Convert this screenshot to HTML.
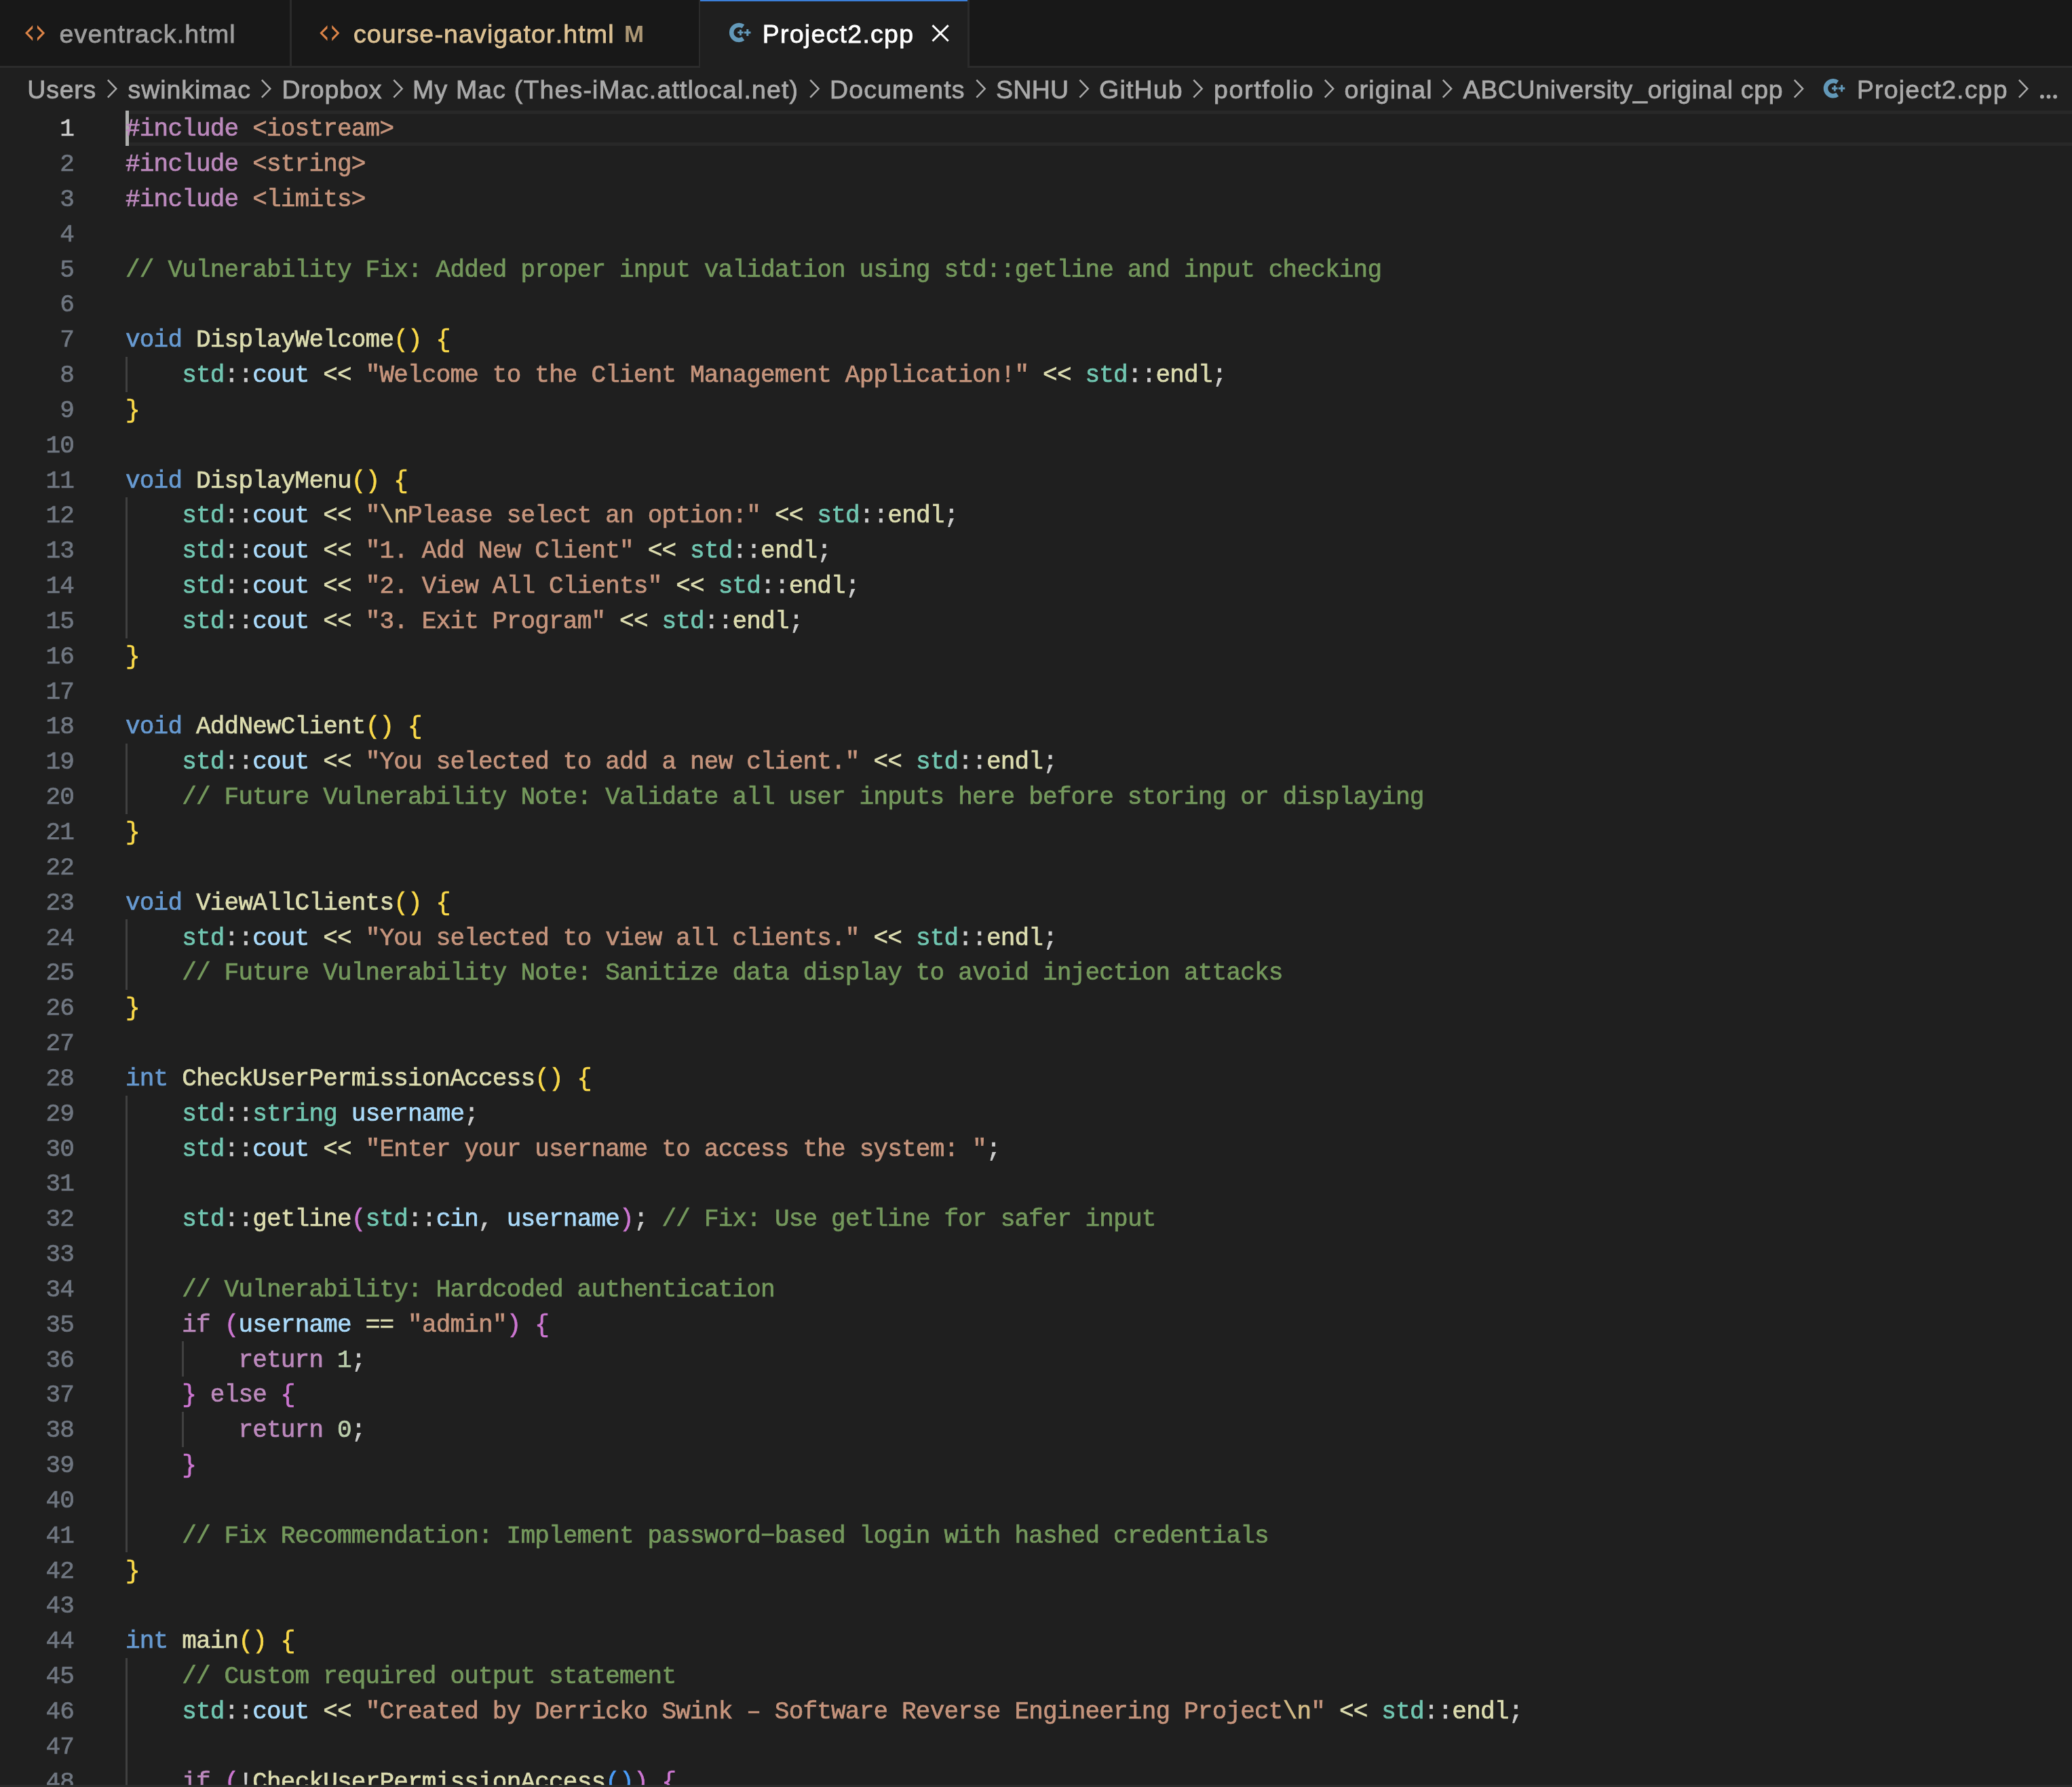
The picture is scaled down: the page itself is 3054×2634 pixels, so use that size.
<!DOCTYPE html>
<html><head><meta charset="utf-8"><title>Project2.cpp</title><style>

html,body{margin:0;padding:0;background:#1f1f1f;}
body{width:3054px;height:2634px;overflow:hidden;position:relative;font-family:"Liberation Sans",sans-serif;font-kerning:none;}
.abs{position:absolute;}
.t{position:absolute;white-space:pre;font-family:"Liberation Sans",sans-serif;-webkit-text-stroke:0.8px;}
#root{position:absolute;left:0;top:0;width:3054px;height:2634px;overflow:hidden;will-change:transform;transform:translateZ(0);}
.ln,.cl{position:absolute;white-space:pre;font-family:"Liberation Mono",monospace;font-size:36.000px;letter-spacing:-0.8035px;line-height:51.84px;height:51.84px;-webkit-text-stroke:0.7px;}
.ln{color:#6f7680;text-align:right;left:0;width:109.00px;}
.cl{left:185.00px;color:#cccccc;}
.g{position:absolute;width:2.88px;background:#404040;}

.fg{color:#cccccc}
.kw{color:#679ad1}
.ctl{color:#bc89bd}
.fn{color:#dcdcaf}
.st{color:#c5947c}
.cm{color:#74985c}
.var{color:#aadafa}
.ty{color:#71c6b1}
.num{color:#bacdab}
.esc{color:#d2bb85}
.b1{color:#f9d849}
.b2{color:#cc76d1}
.b3{color:#4a9df8}
</style></head><body><div id="root">
<div class="abs" style="left:0;top:0;width:3054px;height:99.90px;background:#181818;"></div>
<div class="abs" style="left:0;top:97.02px;width:3054px;height:2.88px;background:#2b2b2b;"></div>
<div class="abs" style="left:427.2px;top:0;width:2.88px;height:99.90px;background:#2b2b2b;"></div>
<div class="abs" style="left:1029.8px;top:0;width:2.7px;height:99.90px;background:#2b2b2b;"></div>
<div class="abs" style="left:1032.3px;top:0;width:393.60px;height:99.90px;background:#1f1f1f;"></div>
<div class="abs" style="left:1032.3px;top:0;width:393.60px;height:2.1px;background:#3b7fd9;"></div>
<div class="abs" style="left:1425.9px;top:0;width:2.88px;height:99.90px;background:#2b2b2b;"></div>
<svg class="abs" style="left:0;top:0;overflow:visible" width="10" height="10"><g transform="translate(0.00,0)" fill="#dc8448"><polygon points="36.99,48.76 48.19,37.37 48.19,42.0 41.04,48.76 48.19,55.52 48.19,60.35"/><polygon points="54.94,36.99 66.14,48.76 54.94,60.54 54.94,55.7 62.08,48.76 54.94,41.8"/></g></svg>
<svg class="abs" style="left:0;top:0;overflow:visible" width="10" height="10"><g transform="translate(434.30,0)" fill="#dc8448"><polygon points="36.99,48.76 48.19,37.37 48.19,42.0 41.04,48.76 48.19,55.52 48.19,60.35"/><polygon points="54.94,36.99 66.14,48.76 54.94,60.54 54.94,55.7 62.08,48.76 54.94,41.8"/></g></svg>
<svg class="abs" style="left:0;top:0;overflow:visible" width="10" height="10"><g transform="translate(0.00,0.00)"><path d="M1095.43 39.02 A10.95 10.95 0 1 0 1095.43 56.96" fill="none" stroke="#6399b9" stroke-width="6.50"/><path d="M1087.22 47.9h8.5M1091.47 43.65v8.5" stroke="#6399b9" stroke-width="2.9" fill="none"/><path d="M1096.9 47.9h9.6M1101.8 42.9v10" stroke="#6399b9" stroke-width="3.0" fill="none"/></g></svg>
<svg class="abs" style="left:0;top:0;overflow:visible" width="10" height="10"><g transform="translate(1612.80,82.30)"><path d="M1095.43 39.02 A10.95 10.95 0 1 0 1095.43 56.96" fill="none" stroke="#6399b9" stroke-width="6.50"/><path d="M1087.22 47.9h8.5M1091.47 43.65v8.5" stroke="#6399b9" stroke-width="2.9" fill="none"/><path d="M1096.9 47.9h9.6M1101.8 42.9v10" stroke="#6399b9" stroke-width="3.0" fill="none"/></g></svg>
<svg class="abs" style="left:0;top:0;overflow:visible" width="10" height="10"><path d="M1374.5 37.4L1397.7 60.5M1397.7 37.4L1374.5 60.5" stroke="#ffffff" stroke-width="2.9" fill="none"/></svg>
<div class="t" style="left:87.50px;top:31.86px;font-size:37.50px;line-height:37.50px;letter-spacing:1.181px;color:#9d9d9d;">eventrack.html</div>
<div class="t" style="left:520.90px;top:31.86px;font-size:37.50px;line-height:37.50px;letter-spacing:1.155px;color:#dcc193;">course-navigator.html</div>
<div class="t" style="left:919.70px;top:33.17px;font-size:34.30px;line-height:34.30px;letter-spacing:-3.572px;color:#ab9674;font-weight:bold;-webkit-text-stroke:0;transform:scaleX(1.02);transform-origin:0 0;">M</div>
<div class="t" style="left:1123.70px;top:31.86px;font-size:37.50px;line-height:37.50px;letter-spacing:1.268px;color:#ffffff;">Project2.cpp</div>
<div class="t" style="left:40.30px;top:113.86px;font-size:37.50px;line-height:37.50px;letter-spacing:0.769px;color:#a9a9a9;">Users</div>
<div class="t" style="left:188.50px;top:113.86px;font-size:37.50px;line-height:37.50px;letter-spacing:0.932px;color:#a9a9a9;">swinkimac</div>
<div class="t" style="left:415.50px;top:113.86px;font-size:37.50px;line-height:37.50px;letter-spacing:0.876px;color:#a9a9a9;">Dropbox</div>
<div class="t" style="left:608.10px;top:113.86px;font-size:37.50px;line-height:37.50px;letter-spacing:1.151px;color:#a9a9a9;">My Mac (Thes-iMac.attlocal.net)</div>
<div class="t" style="left:1223.10px;top:113.86px;font-size:37.50px;line-height:37.50px;letter-spacing:1.092px;color:#a9a9a9;">Documents</div>
<div class="t" style="left:1468.10px;top:113.86px;font-size:37.50px;line-height:37.50px;letter-spacing:0.248px;color:#a9a9a9;">SNHU</div>
<div class="t" style="left:1620.10px;top:113.86px;font-size:37.50px;line-height:37.50px;letter-spacing:1.178px;color:#a9a9a9;">GitHub</div>
<div class="t" style="left:1789.10px;top:113.86px;font-size:37.50px;line-height:37.50px;letter-spacing:1.624px;color:#a9a9a9;">portfolio</div>
<div class="t" style="left:1981.50px;top:113.86px;font-size:37.50px;line-height:37.50px;letter-spacing:1.156px;color:#a9a9a9;">original</div>
<div class="t" style="left:2156.50px;top:113.86px;font-size:37.50px;line-height:37.50px;letter-spacing:0.666px;color:#a9a9a9;">ABCUniversity_original cpp</div>
<div class="t" style="left:2736.90px;top:113.86px;font-size:37.50px;line-height:37.50px;letter-spacing:1.196px;color:#a9a9a9;">Project2.cpp</div>
<svg class="abs" style="left:0;top:0;overflow:visible" width="10" height="10"><g fill="#a9a9a9"><circle cx="3009.9" cy="142.5" r="2.9"/><circle cx="3019.5" cy="142.5" r="2.9"/><circle cx="3029.1" cy="142.5" r="2.9"/></g></svg>
<svg class="abs" style="left:0;top:0;overflow:visible" width="10" height="10"><path d="M158.9 117.9l12.4 12.9-12.4 12.9M385.9 117.9l12.4 12.9-12.4 12.9M580.3 117.9l12.4 12.9-12.4 12.9M1194.2 117.9l12.4 12.9-12.4 12.9M1439.3 117.9l12.4 12.9-12.4 12.9M1591.4 117.9l12.4 12.9-12.4 12.9M1759.3 117.9l12.4 12.9-12.4 12.9M1952.8 117.9l12.4 12.9-12.4 12.9M2126.8 117.9l12.4 12.9-12.4 12.9M2644.8 117.9l12.4 12.9-12.4 12.9M2975.9 117.9l12.4 12.9-12.4 12.9" stroke="#a9a9a9" stroke-width="2.5" fill="none"/></svg>
<div class="abs" style="left:185.00px;top:163.00px;width:2869.00px;height:51.84px;box-sizing:border-box;border-top:5.4px solid #282828;border-bottom:5.4px solid #282828;border-left:0;"></div>
<div class="abs" style="left:185.00px;top:163.00px;width:5.1px;height:51.84px;background:#aeafad;"></div>
<div class="g" style="left:185.00px;top:525.88px;height:51.84px;"></div>
<div class="g" style="left:185.00px;top:733.24px;height:207.36px;"></div>
<div class="g" style="left:185.00px;top:1096.12px;height:103.68px;"></div>
<div class="g" style="left:185.00px;top:1355.32px;height:103.68px;"></div>
<div class="g" style="left:185.00px;top:1614.52px;height:673.92px;"></div>
<div class="g" style="left:185.00px;top:2443.96px;height:207.36px;"></div>
<div class="g" style="left:268.20px;top:1977.40px;height:51.84px;"></div>
<div class="g" style="left:268.20px;top:2081.08px;height:51.84px;"></div>
<div class="ln" style="top:165.20px;color:#cccccc;">1</div>
<div class="cl" style="top:165.20px;"><span class="ctl">#include</span> <span class="st">&lt;iostream&gt;</span></div>
<div class="ln" style="top:217.04px;">2</div>
<div class="cl" style="top:217.04px;"><span class="ctl">#include</span> <span class="st">&lt;string&gt;</span></div>
<div class="ln" style="top:268.88px;">3</div>
<div class="cl" style="top:268.88px;"><span class="ctl">#include</span> <span class="st">&lt;limits&gt;</span></div>
<div class="ln" style="top:320.72px;">4</div>
<div class="ln" style="top:372.56px;">5</div>
<div class="cl" style="top:372.56px;"><span class="cm">// Vulnerability Fix: Added proper input validation using std::getline and input checking</span></div>
<div class="ln" style="top:424.40px;">6</div>
<div class="ln" style="top:476.24px;">7</div>
<div class="cl" style="top:476.24px;"><span class="kw">void</span> <span class="fn">DisplayWelcome</span><span class="b1">()</span> <span class="b1">{</span></div>
<div class="ln" style="top:528.08px;">8</div>
<div class="cl" style="top:528.08px;">    <span class="ty">std</span>::<span class="var">cout</span> <span class="fn">&lt;&lt;</span> <span class="st">&quot;Welcome to the Client Management Application!&quot;</span> <span class="fn">&lt;&lt;</span> <span class="ty">std</span>::<span class="fn">endl</span>;</div>
<div class="ln" style="top:579.92px;">9</div>
<div class="cl" style="top:579.92px;"><span class="b1">}</span></div>
<div class="ln" style="top:631.76px;">10</div>
<div class="ln" style="top:683.60px;">11</div>
<div class="cl" style="top:683.60px;"><span class="kw">void</span> <span class="fn">DisplayMenu</span><span class="b1">()</span> <span class="b1">{</span></div>
<div class="ln" style="top:735.44px;">12</div>
<div class="cl" style="top:735.44px;">    <span class="ty">std</span>::<span class="var">cout</span> <span class="fn">&lt;&lt;</span> <span class="st">&quot;</span><span class="esc">\n</span><span class="st">Please select an option:&quot;</span> <span class="fn">&lt;&lt;</span> <span class="ty">std</span>::<span class="fn">endl</span>;</div>
<div class="ln" style="top:787.28px;">13</div>
<div class="cl" style="top:787.28px;">    <span class="ty">std</span>::<span class="var">cout</span> <span class="fn">&lt;&lt;</span> <span class="st">&quot;1. Add New Client&quot;</span> <span class="fn">&lt;&lt;</span> <span class="ty">std</span>::<span class="fn">endl</span>;</div>
<div class="ln" style="top:839.12px;">14</div>
<div class="cl" style="top:839.12px;">    <span class="ty">std</span>::<span class="var">cout</span> <span class="fn">&lt;&lt;</span> <span class="st">&quot;2. View All Clients&quot;</span> <span class="fn">&lt;&lt;</span> <span class="ty">std</span>::<span class="fn">endl</span>;</div>
<div class="ln" style="top:890.96px;">15</div>
<div class="cl" style="top:890.96px;">    <span class="ty">std</span>::<span class="var">cout</span> <span class="fn">&lt;&lt;</span> <span class="st">&quot;3. Exit Program&quot;</span> <span class="fn">&lt;&lt;</span> <span class="ty">std</span>::<span class="fn">endl</span>;</div>
<div class="ln" style="top:942.80px;">16</div>
<div class="cl" style="top:942.80px;"><span class="b1">}</span></div>
<div class="ln" style="top:994.64px;">17</div>
<div class="ln" style="top:1046.48px;">18</div>
<div class="cl" style="top:1046.48px;"><span class="kw">void</span> <span class="fn">AddNewClient</span><span class="b1">()</span> <span class="b1">{</span></div>
<div class="ln" style="top:1098.32px;">19</div>
<div class="cl" style="top:1098.32px;">    <span class="ty">std</span>::<span class="var">cout</span> <span class="fn">&lt;&lt;</span> <span class="st">&quot;You selected to add a new client.&quot;</span> <span class="fn">&lt;&lt;</span> <span class="ty">std</span>::<span class="fn">endl</span>;</div>
<div class="ln" style="top:1150.16px;">20</div>
<div class="cl" style="top:1150.16px;">    <span class="cm">// Future Vulnerability Note: Validate all user inputs here before storing or displaying</span></div>
<div class="ln" style="top:1202.00px;">21</div>
<div class="cl" style="top:1202.00px;"><span class="b1">}</span></div>
<div class="ln" style="top:1253.84px;">22</div>
<div class="ln" style="top:1305.68px;">23</div>
<div class="cl" style="top:1305.68px;"><span class="kw">void</span> <span class="fn">ViewAllClients</span><span class="b1">()</span> <span class="b1">{</span></div>
<div class="ln" style="top:1357.52px;">24</div>
<div class="cl" style="top:1357.52px;">    <span class="ty">std</span>::<span class="var">cout</span> <span class="fn">&lt;&lt;</span> <span class="st">&quot;You selected to view all clients.&quot;</span> <span class="fn">&lt;&lt;</span> <span class="ty">std</span>::<span class="fn">endl</span>;</div>
<div class="ln" style="top:1409.36px;">25</div>
<div class="cl" style="top:1409.36px;">    <span class="cm">// Future Vulnerability Note: Sanitize data display to avoid injection attacks</span></div>
<div class="ln" style="top:1461.20px;">26</div>
<div class="cl" style="top:1461.20px;"><span class="b1">}</span></div>
<div class="ln" style="top:1513.04px;">27</div>
<div class="ln" style="top:1564.88px;">28</div>
<div class="cl" style="top:1564.88px;"><span class="kw">int</span> <span class="fn">CheckUserPermissionAccess</span><span class="b1">()</span> <span class="b1">{</span></div>
<div class="ln" style="top:1616.72px;">29</div>
<div class="cl" style="top:1616.72px;">    <span class="ty">std</span>::<span class="ty">string</span> <span class="var">username</span>;</div>
<div class="ln" style="top:1668.56px;">30</div>
<div class="cl" style="top:1668.56px;">    <span class="ty">std</span>::<span class="var">cout</span> <span class="fn">&lt;&lt;</span> <span class="st">&quot;Enter your username to access the system: &quot;</span>;</div>
<div class="ln" style="top:1720.40px;">31</div>
<div class="ln" style="top:1772.24px;">32</div>
<div class="cl" style="top:1772.24px;">    <span class="ty">std</span>::<span class="fn">getline</span><span class="b2">(</span><span class="ty">std</span>::<span class="var">cin</span>, <span class="var">username</span><span class="b2">)</span>; <span class="cm">// Fix: Use getline for safer input</span></div>
<div class="ln" style="top:1824.08px;">33</div>
<div class="ln" style="top:1875.92px;">34</div>
<div class="cl" style="top:1875.92px;">    <span class="cm">// Vulnerability: Hardcoded authentication</span></div>
<div class="ln" style="top:1927.76px;">35</div>
<div class="cl" style="top:1927.76px;">    <span class="ctl">if</span> <span class="b2">(</span><span class="var">username</span> <span class="fn">==</span> <span class="st">&quot;admin&quot;</span><span class="b2">)</span> <span class="b2">{</span></div>
<div class="ln" style="top:1979.60px;">36</div>
<div class="cl" style="top:1979.60px;">        <span class="ctl">return</span> <span class="num">1</span>;</div>
<div class="ln" style="top:2031.44px;">37</div>
<div class="cl" style="top:2031.44px;">    <span class="b2">}</span> <span class="ctl">else</span> <span class="b2">{</span></div>
<div class="ln" style="top:2083.28px;">38</div>
<div class="cl" style="top:2083.28px;">        <span class="ctl">return</span> <span class="num">0</span>;</div>
<div class="ln" style="top:2135.12px;">39</div>
<div class="cl" style="top:2135.12px;">    <span class="b2">}</span></div>
<div class="ln" style="top:2186.96px;">40</div>
<div class="ln" style="top:2238.80px;">41</div>
<div class="cl" style="top:2238.80px;">    <span class="cm">// Fix Recommendation: Implement password−based login with hashed credentials</span></div>
<div class="ln" style="top:2290.64px;">42</div>
<div class="cl" style="top:2290.64px;"><span class="b1">}</span></div>
<div class="ln" style="top:2342.48px;">43</div>
<div class="ln" style="top:2394.32px;">44</div>
<div class="cl" style="top:2394.32px;"><span class="kw">int</span> <span class="fn">main</span><span class="b1">()</span> <span class="b1">{</span></div>
<div class="ln" style="top:2446.16px;">45</div>
<div class="cl" style="top:2446.16px;">    <span class="cm">// Custom required output statement</span></div>
<div class="ln" style="top:2498.00px;">46</div>
<div class="cl" style="top:2498.00px;">    <span class="ty">std</span>::<span class="var">cout</span> <span class="fn">&lt;&lt;</span> <span class="st">&quot;Created by Derricko Swink – Software Reverse Engineering Project</span><span class="esc">\n</span><span class="st">&quot;</span> <span class="fn">&lt;&lt;</span> <span class="ty">std</span>::<span class="fn">endl</span>;</div>
<div class="ln" style="top:2549.84px;">47</div>
<div class="ln" style="top:2601.68px;">48</div>
<div class="cl" style="top:2601.68px;">    <span class="ctl">if</span> <span class="b2">(</span>!<span class="fn">CheckUserPermissionAccess</span><span class="b3">()</span><span class="b2">)</span> <span class="b2">{</span></div>
<div class="abs" style="left:0;top:2631px;width:3054px;height:3px;background:#2b2b2b;"></div>
</div></body></html>
